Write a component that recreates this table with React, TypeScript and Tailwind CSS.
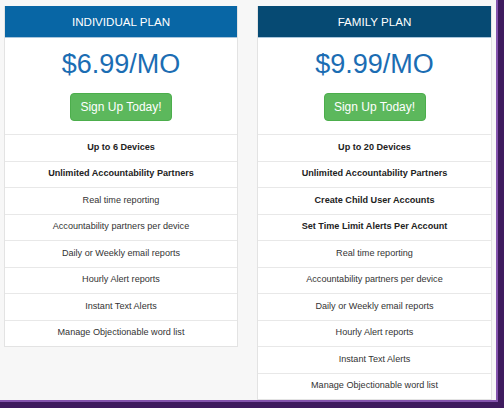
import React from "react";

type Feature = { text: string; bold?: boolean };

const individual: Feature[] = [
  { text: "Up to 6 Devices", bold: true },
  { text: "Unlimited Accountability Partners", bold: true },
  { text: "Real time reporting" },
  { text: "Accountability partners per device" },
  { text: "Daily or Weekly email reports" },
  { text: "Hourly Alert reports" },
  { text: "Instant Text Alerts" },
  { text: "Manage Objectionable word list" },
];

const family: Feature[] = [
  { text: "Up to 20 Devices", bold: true },
  { text: "Unlimited Accountability Partners", bold: true },
  { text: "Create Child User Accounts", bold: true },
  { text: "Set Time Limit Alerts Per Account", bold: true },
  { text: "Real time reporting" },
  { text: "Accountability partners per device" },
  { text: "Daily or Weekly email reports" },
  { text: "Hourly Alert reports" },
  { text: "Instant Text Alerts" },
  { text: "Manage Objectionable word list" },
];

function Card({
  title,
  price,
  headerClass,
  widthClass,
  features,
}: {
  title: string;
  price: string;
  headerClass: string;
  widthClass: string;
  features: Feature[];
}) {
  return (
    <div className={`${widthClass} flex flex-col bg-white border border-[#e3e3e3] border-t-0 self-start`}>
      <div
        className={`${headerClass} h-[32px] flex items-center justify-center text-white text-[11.6px] border-b border-[#a9c6dc]`}
      >
        {title}
      </div>
      <div className="flex flex-col items-center pt-[12px] pb-[13px]">
        <div className="h-[28px] leading-[28px] text-[27px] text-[#1b6db3]">{price}</div>
        <button className="mt-[15px] w-[102px] h-[28px] rounded-[4px] bg-[#5cb85c] border border-[#4cae4c] text-white text-[12px] leading-none">
          Sign Up Today!
        </button>
      </div>
      {features.map((f, i) => (
        <div
          key={i}
          className={`h-[26.5px] border-t border-[#e8e8e8] flex items-center justify-center text-[9.1px] ${
            f.bold ? "font-bold text-[#222]" : "text-[#333]"
          }`}
        >
          {f.text}
        </div>
      ))}
    </div>
  );
}

export default function App() {
  return (
    <div
      className="w-[504px] h-[408px] bg-[#3e1a5e] overflow-hidden"
      style={{ fontFamily: '"Liberation Sans", Arial, sans-serif' }}
    >
      <div className="w-[498px] h-[402px] bg-[#f7f7f7] border-r-2 border-b-2 border-[#8454ad] flex items-start gap-[19px] pl-[4px] pt-[6px]">
        <Card
          title="INDIVIDUAL PLAN"
          price="$6.99/MO"
          headerClass="bg-[#0866a5]"
          widthClass="w-[234px]"
          features={individual}
        />
        <Card
          title="FAMILY PLAN"
          price="$9.99/MO"
          headerClass="bg-[#064a73]"
          widthClass="w-[235px]"
          features={family}
        />
      </div>
    </div>
  );
}
